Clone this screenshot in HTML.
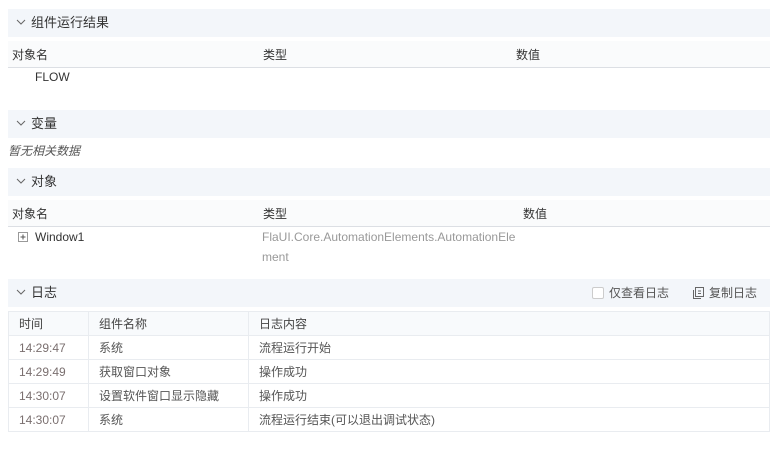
<!DOCTYPE html>
<html><head><meta charset="utf-8"><style>
*{box-sizing:border-box;margin:0;padding:0}
body{width:782px;height:472px;background:#fff;font-family:"Liberation Sans","Noto Sans CJK SC",sans-serif;font-size:12px;color:#333;position:relative;overflow:hidden}
.a{position:absolute;white-space:nowrap;line-height:14px}
.hd{position:absolute;left:8px;width:762px;height:28px;background:#f3f6fa}
.hd span{position:absolute;left:23px;top:6px;font-size:13px;line-height:16px;color:#333}
.hd svg{position:absolute;left:8px;top:10px}
.th{position:absolute;left:8px;width:762px;height:27px;background:#fafbfc;border-bottom:1px solid #dcdfe4}
table{position:absolute;left:8px;top:311px;width:762px;border-collapse:collapse}
td{border:1px solid #e9ecf0;height:24px;padding:0 0 0 10px;color:#555;line-height:14px}
tr:first-child td{background:#f8fafc;color:#444}
td.t{color:#7a6f6f}
</style></head><body>
<div class="hd" style="top:9px"><svg width="10" height="6"><path d="M1 1L5 5L9 1" stroke="#666" fill="none"/></svg><span>组件运行结果</span></div>
<div class="th" style="top:41px"></div>
<div class="a" style="left:12px;top:48px">对象名</div>
<div class="a" style="left:263px;top:48px">类型</div>
<div class="a" style="left:516px;top:48px">数值</div>
<div class="a" style="left:35px;top:70px">FLOW</div>

<div class="hd" style="top:110px"><svg width="10" height="6"><path d="M1 1L5 5L9 1" stroke="#666" fill="none"/></svg><span>变量</span></div>
<div class="a" style="left:8px;top:144px;font-style:italic;color:#555">暂无相关数据</div>

<div class="hd" style="top:168px"><svg width="10" height="6"><path d="M1 1L5 5L9 1" stroke="#666" fill="none"/></svg><span>对象</span></div>
<div class="th" style="top:200px"></div>
<div class="a" style="left:12px;top:207px">对象名</div>
<div class="a" style="left:263px;top:207px">类型</div>
<div class="a" style="left:523px;top:207px">数值</div>
<svg class="a" style="left:18px;top:232px" width="10" height="10"><rect x=".5" y=".5" width="9" height="9" fill="none" stroke="#999"/><path d="M2.5 5H7.5M5 2.5V7.5" stroke="#555"/></svg>
<div class="a" style="left:35px;top:230px">Window1</div>
<div class="a" style="left:262px;top:230px;color:#999">FlaUI.Core.AutomationElements.AutomationEle</div>
<div class="a" style="left:262px;top:250px;color:#999">ment</div>

<div class="hd" style="top:279px"><svg width="10" height="6"><path d="M1 1L5 5L9 1" stroke="#666" fill="none"/></svg><span>日志</span></div>
<div class="a" style="left:592px;top:287px;width:12px;height:12px;border:1px solid #ccc;background:#fff;border-radius:2px"></div>
<div class="a" style="left:609px;top:286px;color:#555">仅查看日志</div>
<svg class="a" style="left:693px;top:287px" width="11" height="12"><rect x="2.5" y=".5" width="8" height="9" fill="none" stroke="#666"/><path d="M.5 3V11.5H8" stroke="#666" fill="none"/><path d="M5 4H8M5 6.5H8" stroke="#666"/></svg>
<div class="a" style="left:709px;top:286px;color:#555">复制日志</div>

<table>
<col style="width:80px"><col style="width:160px"><col>
<tr><td>时间</td><td>组件名称</td><td>日志内容</td></tr>
<tr><td class="t">14:29:47</td><td>系统</td><td>流程运行开始</td></tr>
<tr><td class="t">14:29:49</td><td>获取窗口对象</td><td>操作成功</td></tr>
<tr><td class="t">14:30:07</td><td>设置软件窗口显示隐藏</td><td>操作成功</td></tr>
<tr><td class="t">14:30:07</td><td>系统</td><td>流程运行结束(可以退出调试状态)</td></tr>
</table>
</body></html>
